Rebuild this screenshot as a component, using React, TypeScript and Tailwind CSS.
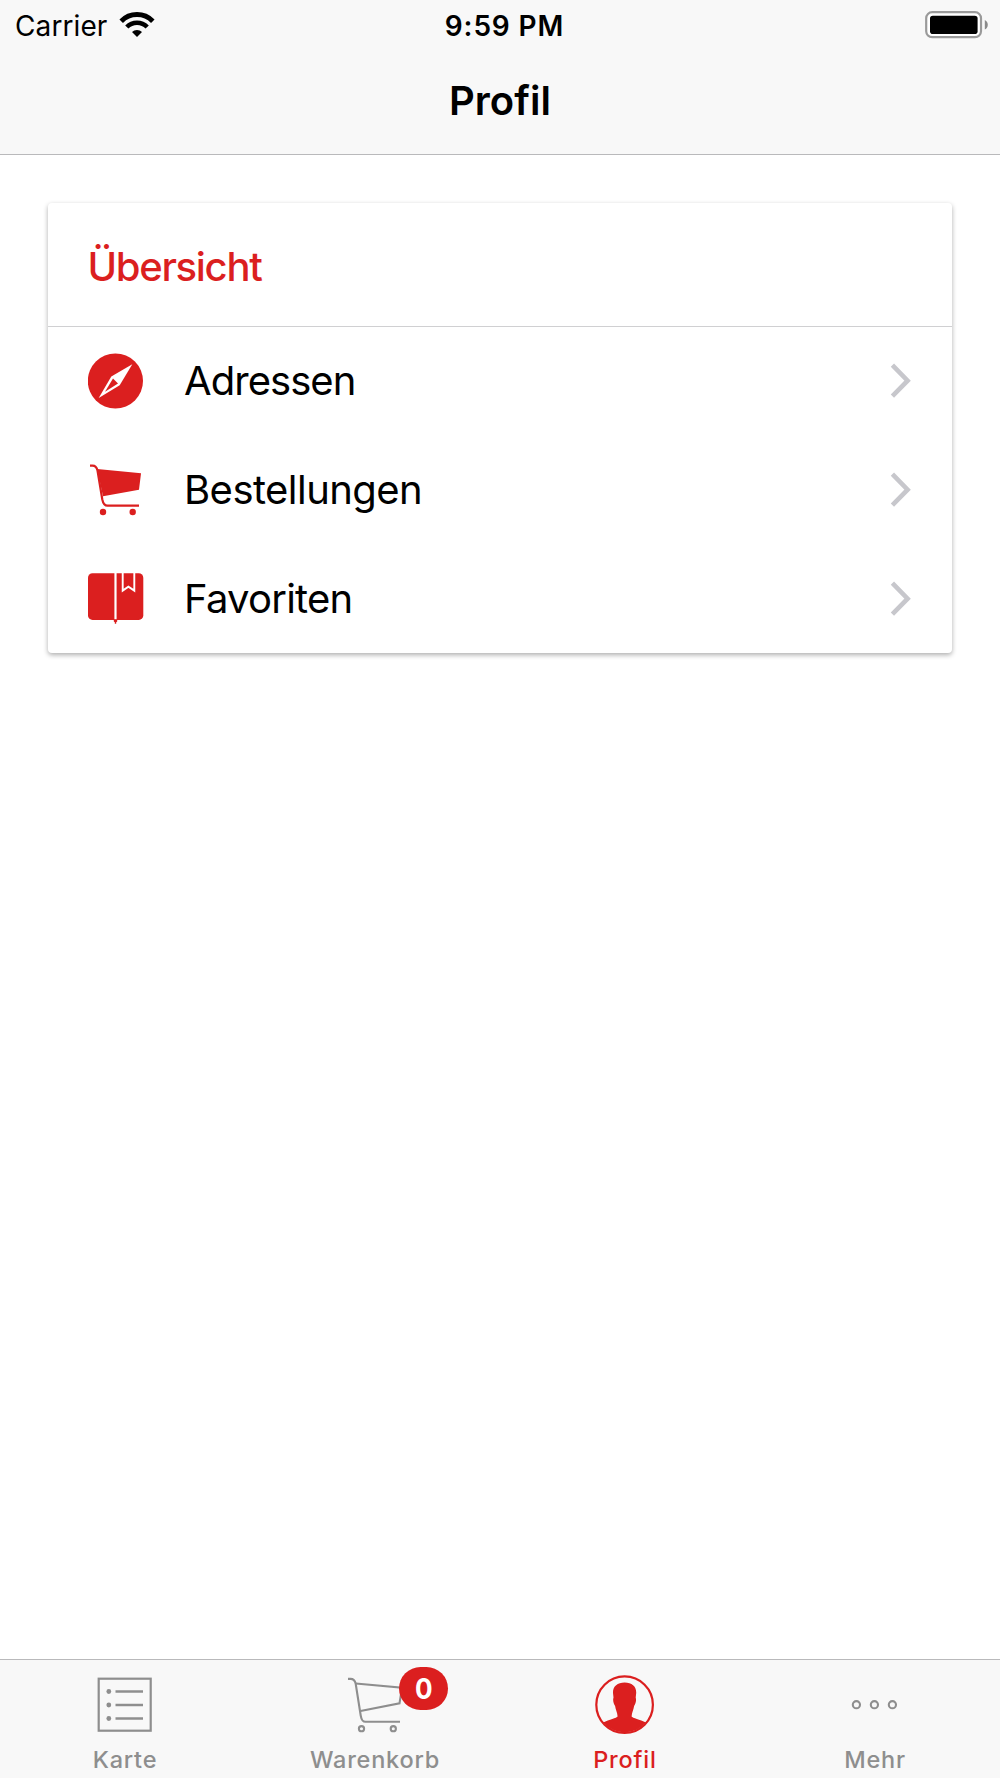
import type { ReactNode } from "react";
import { clsx } from "clsx";

function WifiIcon() {
  return (
    <svg width="36" height="26" viewBox="0 0 36 26" fill="none" stroke="#000">
      <path d="M2.2 9.2a22 22 0 0 1 31.6 0" strokeWidth="4.9" />
      <path d="M7.8 15a14.2 14.2 0 0 1 20.4 0" strokeWidth="4.5" />
      <path d="M18 25l-5-4.9a7.1 7.1 0 0 1 10 0z" fill="#000" stroke="none" />
    </svg>
  );
}

function BatteryIcon() {
  return (
    <svg width="64" height="28" viewBox="0 0 64 28">
      <rect x="1.2" y="1.2" width="54.8" height="25" rx="6" fill="#fff" stroke="#9a9a9a" strokeWidth="2.2" />
      <rect x="5" y="4.7" width="47.6" height="18.3" rx="2.8" fill="#000" />
      <path d="M59.8 9c4 2 4 7.6 0 9.6z" fill="#8a8a8a" />
    </svg>
  );
}

function CompassIcon() {
  return (
    <svg width="56" height="56" viewBox="0 0 56 56">
      <circle cx="27.4" cy="28" r="27.6" fill="#db1f1f" />
      <path d="M44.3 11.2 L31.7 32.2 L10.7 45 L23.3 23.6 Z" fill="#fff" />
      <path d="M25 25.6 L30 30.6 L17 38.7 Z" fill="#db1f1f" />
    </svg>
  );
}

function OrdersIcon() {
  return (
    <svg width="56" height="56" viewBox="0 0 56 56">
      <path d="M9.2 7 L53 11.3 L51 27.8 L15 34.2 Z" fill="#db1f1f" />
      <path
        d="M2 3.7 H4.5 C8 3.7 8.8 5.5 9.5 8.5 L14.3 37.5 C15.2 42 16.5 43.7 19.5 43.7 H51"
        fill="none"
        stroke="#db1f1f"
        strokeWidth="2.2"
      />
      <circle cx="15" cy="50" r="3.2" fill="#db1f1f" />
      <circle cx="44.7" cy="50" r="3.2" fill="#db1f1f" />
    </svg>
  );
}

function BookIcon() {
  return (
    <svg width="56" height="56" viewBox="0 0 56 56">
      <rect x="0" y="2.3" width="55.3" height="46.6" rx="4.5" fill="#db1f1f" />
      <path d="M25.8 48 h3.4 v2.6 l-1 .6 v1.6 h-1.4 v-1.6 l-1 -.6 z" fill="#db1f1f" />
      <path d="M27.5 2 v46.2" stroke="#fff" strokeWidth="2.2" />
      <path d="M34.7 2 V19.6 L40.4 15.6 L46.3 19.6 V2" fill="none" stroke="#fff" strokeWidth="1.9" />
    </svg>
  );
}

function Chevron() {
  return (
    <svg width="24" height="36" viewBox="0 0 24 36" fill="none">
      <path d="M2.4 2.2 L17.6 17.7 L2.4 33.2" stroke="#c7c7cc" strokeWidth="4.6" />
    </svg>
  );
}

function MenuIcon() {
  return (
    <svg width="60" height="60" viewBox="0 0 60 60" fill="none" stroke="#8e8e8e">
      <rect x="3.7" y="3.7" width="52" height="52" strokeWidth="2.2" />
      <path d="M20.5 16.5h27.5M20.5 30h27.5M20.5 43.5h27.5" strokeWidth="2.4" />
      <g fill="#8e8e8e" stroke="none">
        <circle cx="13.8" cy="16.5" r="2.4" />
        <circle cx="13.8" cy="30" r="2.4" />
        <circle cx="13.8" cy="43.5" r="2.4" />
      </g>
    </svg>
  );
}

function CartIcon() {
  return (
    <svg width="60" height="60" viewBox="0 0 60 60" fill="none" stroke="#8e8e8e" strokeWidth="2.1">
      <path d="M3 3.9 H5.5 C9 3.9 10 5.5 10.7 8.8 L15.7 40.5 C16.5 45 17.5 46.7 20.5 46.7 H55" />
      <path d="M10.7 8.5 L57 12.8 L54.5 28.3 L15.5 36" />
      <circle cx="16.5" cy="53.7" r="2.6" />
      <circle cx="48.3" cy="53.7" r="2.6" />
    </svg>
  );
}

function ProfileIcon() {
  return (
    <svg width="60" height="60" viewBox="0 0 60 60">
      <circle cx="29.6" cy="29.7" r="28.3" fill="none" stroke="#db1f1f" strokeWidth="2.2" />
      <path
        d="M29.6 7.5 C37 7.5 41.5 11.5 41.2 18 L40.7 22.5 C41.7 25.5 40.4 29 39.1 31 C38.7 34.5 36.9 37 36.6 41.5 C37.5 43 45 44.5 51 47.5 A28.3 28.3 0 0 1 8.2 47.5 C14.2 44.5 21.7 43 22.6 41.5 C22.3 37 20.5 34.5 20.1 31 C18.8 29 17.5 25.5 18.5 22.5 L18 18 C17.7 11.5 22.3 7.5 29.6 7.5 Z"
        fill="#db1f1f"
      />
    </svg>
  );
}

function MoreIcon() {
  return (
    <svg width="60" height="60" viewBox="0 0 60 60" fill="none" stroke="#8e8e8e" strokeWidth="2.1">
      <circle cx="11.4" cy="29.7" r="3.6" />
      <circle cx="29.4" cy="29.7" r="3.6" />
      <circle cx="47.4" cy="29.7" r="3.6" />
    </svg>
  );
}

const entries = [
  { label: "Adressen", icon: <CompassIcon />, spacing: "tracking-[-0.95px]" },
  { label: "Bestellungen", icon: <OrdersIcon />, spacing: "tracking-[-0.55px]" },
  { label: "Favoriten", icon: <BookIcon />, spacing: "tracking-[-0.75px]" },
];

type TabProps = {
  label: string;
  icon: ReactNode;
  active?: boolean;
  badge?: number;
};

function Tab({ label, icon, active, badge }: TabProps) {
  return (
    <button
      className={clsx(
        "flex flex-col items-center pt-[15px] text-[23.5px] leading-[30px] font-[460] tracking-[0.8px]",
        active ? "text-[#db1f1f]" : "text-[#8e8e8e]"
      )}
    >
      <span className="relative block h-[60px] w-[60px]">
        {icon}
        {badge !== undefined && (
          <span className="absolute top-[-8px] left-[54px] flex h-[43px] w-[49px] items-center justify-center rounded-full bg-[#db1f1f] text-[29px] font-bold tracking-normal text-white">
            <span className="scale-x-90">{badge}</span>
          </span>
        )}
      </span>
      <span className="mt-[10px]">{label}</span>
    </button>
  );
}

export default function App() {
  return (
    <div className="flex h-[1778px] w-[1000px] flex-col overflow-hidden bg-white font-['Inter',sans-serif] text-black">
      <header className="h-[155px] border-b border-[#b9b9bb] bg-[#f8f8f8]">
        {/* Status bar */}
        <div className="grid h-[49px] grid-cols-3 items-center pr-[11px] pl-[12px]">
          <div className="flex items-center gap-[12px] pl-[3px]">
            <span className="pt-[2px] text-[28px] tracking-[0.1px]">Carrier</span>
            <WifiIcon />
          </div>
          <span className="pt-[2px] pl-[8px] text-center text-[28px] font-semibold tracking-[0.85px]">
            9:59 PM
          </span>
          <div className="flex justify-end">
            <BatteryIcon />
          </div>
        </div>
        <h1 className="pt-[28px] text-center text-[40px] leading-[48px] font-semibold">Profil</h1>
      </header>

      <main className="flex-1 px-[48px] pt-[48px]">
        <section className="rounded-[4px] bg-white shadow-[0_2px_5px_rgba(0,0,0,0.32)]">
          <h2 className="h-[124px] border-b border-[#d0d0d2] pt-[40px] pl-[39.5px] text-[40px] leading-[48px] font-[460] tracking-[-1.3px] text-[#db1f1f]">
            Übersicht
          </h2>
          <ul className="grid h-[326px] grid-rows-3">
            {entries.map((entry) => (
              <li key={entry.label} className="flex items-center pr-[38px] pl-[40px]">
                {entry.icon}
                <span className={clsx("ml-[40px] flex-1 text-[40px] leading-[48px]", entry.spacing)}>
                  {entry.label}
                </span>
                <Chevron />
              </li>
            ))}
          </ul>
        </section>
      </main>

      {/* Tab bar */}
      <nav className="grid h-[119px] grid-cols-4 border-t border-[#b9b9bb] bg-[#f8f8f8]">
        <Tab label="Karte" icon={<MenuIcon />} />
        <Tab label="Warenkorb" icon={<CartIcon />} badge={0} />
        <Tab label="Profil" icon={<ProfileIcon />} active />
        <Tab label="Mehr" icon={<MoreIcon />} />
      </nav>
    </div>
  );
}
